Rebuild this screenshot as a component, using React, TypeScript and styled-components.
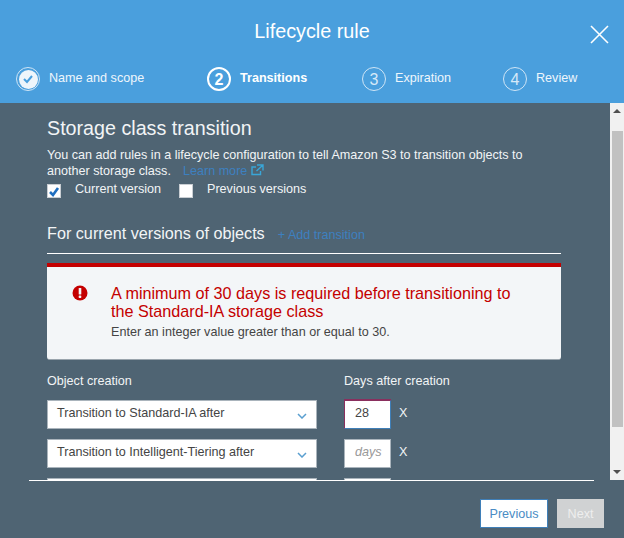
import styled, { createGlobalStyle } from "styled-components";

const GlobalStyle = createGlobalStyle`
  html, body {
    margin: 0;
    padding: 0;
    background: #4f6473;
  }
  * {
    box-sizing: border-box;
  }
`;

const Modal = styled.div`
  width: 624px;
  height: 538px;
  display: flex;
  flex-direction: column;
  overflow: hidden;
  background: #4f6473;
  color: #f2f4f6;
  font-family: "Liberation Sans", Arial, sans-serif;
  font-size: 12.6px;
`;

const Header = styled.header`
  height: 103px;
  flex: none;
  background: #4a9fdd;
  color: #fff;
  display: flex;
  flex-direction: column;
`;

const TitleBar = styled.div`
  height: 67px;
  flex: none;
  display: flex;
  align-items: flex-start;
  justify-content: center;
  padding-top: 20px;
  position: relative;
`;

const Title = styled.h1`
  margin: 0;
  font-size: 19.8px;
  font-weight: 400;
  line-height: 23px;
`;

const CloseButton = styled.div`
  position: absolute;
  top: 25px;
  right: 15px;
  width: 19px;
  height: 19px;
  display: flex;
`;

const Steps = styled.ol`
  margin: 0;
  padding: 0 0 0 16px;
  list-style: none;
  display: grid;
  grid-template-columns: 191px 155px 141px auto;
`;

const Step = styled.li`
  display: flex;
  align-items: flex-start;
  gap: 9px;
`;

const StepCircle = styled.span<{ $active?: boolean }>`
  width: 24px;
  height: 24px;
  flex: none;
  border-radius: 50%;
  border: ${({ $active }) => ($active ? "2px solid #fff" : "1px solid #cfe5f6")};
  color: ${({ $active }) => ($active ? "#fff" : "#d6e9f8")};
  font-size: 16px;
  font-weight: ${({ $active }) => ($active ? 700 : 400)};
  display: flex;
  align-items: center;
  justify-content: center;
  line-height: 1;
  padding-top: 2px;
`;

const DoneCircle = styled.span`
  width: 24px;
  height: 24px;
  flex: none;
  border-radius: 50%;
  border: 1px solid #cfe5f6;
  padding: 1.5px;
  display: flex;
`;

const DoneDisc = styled.span`
  flex: 1;
  border-radius: 50%;
  background: #eef5fb;
  display: flex;
  align-items: center;
  justify-content: center;
`;

const StepLabel = styled.span<{ $active?: boolean }>`
  font-weight: ${({ $active }) => ($active ? 700 : 400)};
  color: ${({ $active }) => ($active ? "#fff" : "#eef6fc")};
  line-height: 15px;
  margin-top: 4px;
`;

const Middle = styled.div`
  height: 377px;
  flex: none;
  display: flex;
  overflow: hidden;
`;

const Content = styled.main`
  flex: 1;
  min-width: 0;
  padding: 15px 49px 0 47px;
`;

const SectionTitle = styled.h2`
  margin: 0;
  font-size: 19.7px;
  font-weight: 400;
  line-height: 21px;
  color: #f2f4f6;
`;

const Intro = styled.p`
  margin: 8px 0 0;
  line-height: 16px;
  color: #f2f4f6;
  width: 490px;
`;

const LearnMore = styled.span`
  color: #3d80c0;
  margin-left: 12px;
`;

const ExternalIcon = styled.svg`
  margin-left: 4px;
  vertical-align: -1px;
`;

const Versions = styled.div`
  display: flex;
  margin-top: 3px;
  height: 18px;
`;

const Version = styled.label<{ $width: number }>`
  width: ${({ $width }) => $width}px;
  display: flex;
  gap: 14px;
  align-items: flex-start;
  line-height: 15px;
`;

const CheckBox = styled.span`
  width: 14px;
  height: 14px;
  margin-top: 2px;
  flex: none;
  background: #fff;
  border: 1px solid #c9ced3;
  display: flex;
  align-items: center;
  justify-content: center;
`;

const SubHeading = styled.div`
  margin-top: 24px;
  height: 30px;
  display: flex;
  align-items: flex-start;
  gap: 13px;
  border-bottom: 1px solid #fff;
`;

const SubTitle = styled.h3`
  margin: 0;
  font-size: 16.2px;
  font-weight: 400;
  line-height: 19px;
`;

const AddLink = styled.span`
  color: #3d80c0;
  line-height: 15px;
  margin-top: 4px;
`;

const Alert = styled.div`
  margin-top: 9px;
  height: 97px;
  background: #f3f6f8;
  border-top: 4px solid #c40000;
  border-bottom: 1px solid #9aa5ad;
  border-radius: 0 0 3px 3px;
  padding: 17px 20px 0 25px;
  display: flex;
  gap: 23px;
`;

const AlertIcon = styled.svg`
  flex: none;
  margin-top: 1px;
`;

const AlertBody = styled.div`
  width: 410px;
`;

const AlertTitle = styled.div`
  color: #c40000;
  font-size: 16.2px;
  line-height: 18px;
`;

const AlertText = styled.div`
  color: #444;
  line-height: 15px;
  margin-top: 5px;
`;

const FieldHeadings = styled.div`
  margin-top: 14px;
  display: grid;
  grid-template-columns: 297px auto;
  line-height: 15px;
`;

const FieldGrid = styled.div`
  margin-top: 11px;
  display: grid;
  grid-template-columns: 270px 47px auto;
  column-gap: 27px;
  grid-auto-rows: 29px;
  row-gap: 10px;
`;

const Select = styled.div`
  background: #fff;
  border: 1px solid #aab4bc;
  color: #444;
  padding: 5px 9px 0;
  line-height: 15px;
  display: flex;
  justify-content: space-between;
`;

const Chevron = styled.svg`
  margin: 7px 0 0 auto;
`;

const NumberBox = styled.div<{ $focused?: boolean; $empty?: boolean }>`
  background: #fff;
  border: 1px solid ${({ $focused }) => ($focused ? "#3f7fb8" : "#aab4bc")};
  ${({ $focused }) =>
    $focused
      ? "border-left-color: #8a2f5e; border-top-color: #8a2f5e; box-shadow: 0 -1px 0 #8a2f5e;"
      : ""}
  color: ${({ $empty }) => ($empty ? "#999" : "#444")};
  font-style: ${({ $empty }) => ($empty ? "italic" : "normal")};
  padding: 5px 0 0 10px;
  line-height: 15px;
`;

const RemoveMark = styled.span`
  line-height: 15px;
  margin: 6px 0 0 -19px;
`;

const ScrollBar = styled.div`
  width: 14px;
  flex: none;
  background: #f1f1f1;
  display: flex;
  flex-direction: column;
`;

const ScrollArrow = styled.span<{ $down?: boolean }>`
  height: 16px;
  flex: none;
  padding-left: 3px;
  display: flex;
  align-items: center;
  &::before {
    content: "";
    border-left: 4px solid transparent;
    border-right: 4px solid transparent;
    ${({ $down }) =>
      $down ? "border-top: 4px solid #505050;" : "border-bottom: 4px solid #505050;"}
  }
`;

const ScrollThumb = styled.span`
  width: 11px;
  height: 296px;
  margin: 12px 0 0 2px;
  background: #c1c1c1;
`;

const ScrollSpace = styled.span`
  flex: 1;
`;

const FooterRule = styled.hr`
  margin: 0 30px 0 29px;
  border: 0;
  border-top: 1px solid #fff;
  height: 0;
  flex: none;
`;

const Footer = styled.footer`
  padding: 18px 20px 0 0;
  display: flex;
  justify-content: flex-end;
  gap: 9px;
`;

const Button = styled.button<{ $disabled?: boolean; $width: number }>`
  width: ${({ $width }) => $width}px;
  height: 29px;
  padding: 0;
  font: inherit;
  border-radius: 0;
  border: 1px solid ${({ $disabled }) => ($disabled ? "#d0d2d3" : "#3f7fb8")};
  background: ${({ $disabled }) => ($disabled ? "#d0d2d3" : "#fff")};
  color: ${({ $disabled }) => ($disabled ? "#eee" : "#4a8cc4")};
`;

const stepItems = [
  { n: "2", label: "Transitions", active: true },
  { n: "3", label: "Expiration" },
  { n: "4", label: "Review" },
];

const rows = [
  { label: "Transition to Standard-IA after", days: "28", focused: true },
  { label: "Transition to Intelligent-Tiering after", days: "days" },
  { label: "", days: "" },
];

const App = () => {
  return (
    <Modal>
      <GlobalStyle />
      <Header>
        <TitleBar>
          <Title>Lifecycle rule</Title>
          <CloseButton>
            <svg width="19" height="19" viewBox="0 0 19 19">
              <path d="M1 1 L18 18 M18 1 L1 18" stroke="#fff" strokeWidth="1.6" fill="none" />
            </svg>
          </CloseButton>
        </TitleBar>
        <Steps>
          <Step>
            <DoneCircle>
              <DoneDisc>
                <svg width="12" height="10" viewBox="0 0 12 10">
                  <path d="M2 5 L5 8 L10 2" stroke="#4a9fdd" strokeWidth="2" fill="none" />
                </svg>
              </DoneDisc>
            </DoneCircle>
            <StepLabel>Name and scope</StepLabel>
          </Step>
          {stepItems.map((s) => (
            <Step key={s.n}>
              <StepCircle $active={s.active}>{s.n}</StepCircle>
              <StepLabel $active={s.active}>{s.label}</StepLabel>
            </Step>
          ))}
        </Steps>
      </Header>
      <Middle>
        <Content>
          <SectionTitle>Storage class transition</SectionTitle>
          <Intro>
            You can add rules in a lifecycle configuration to tell Amazon S3 to transition objects to
            another storage class.
            <LearnMore>
              Learn more
              <ExternalIcon width="13" height="12" viewBox="0 0 13 12">
                <path
                  d="M9.5 7 V10.5 H1 V3 H5 M6 1 H12 V6.5 M12 1 L5.5 7"
                  stroke="#39a6d8"
                  strokeWidth="1.4"
                  fill="none"
                />
              </ExternalIcon>
            </LearnMore>
          </Intro>
          <Versions>
            <Version $width={132}>
              <CheckBox>
                <svg width="12" height="11" viewBox="0 0 12 11">
                  <path d="M2 6 L5 9 L10 2" stroke="#1f6fc0" strokeWidth="2.6" fill="none" />
                </svg>
              </CheckBox>
              Current version
            </Version>
            <Version $width={200}>
              <CheckBox />
              Previous versions
            </Version>
          </Versions>
          <SubHeading>
            <SubTitle>For current versions of objects</SubTitle>
            <AddLink>+ Add transition</AddLink>
          </SubHeading>
          <Alert>
            <AlertIcon width="16" height="16" viewBox="0 0 16 16">
              <circle cx="8" cy="8" r="7.5" fill="#c40000" />
              <rect x="6.7" y="3" width="2.6" height="6.5" rx="0.6" fill="#f3f6f8" />
              <rect x="6.7" y="10.5" width="2.6" height="2.4" rx="0.6" fill="#f3f6f8" />
            </AlertIcon>
            <AlertBody>
              <AlertTitle>
                A minimum of 30 days is required before transitioning to the Standard-IA storage class
              </AlertTitle>
              <AlertText>Enter an integer value greater than or equal to 30.</AlertText>
            </AlertBody>
          </Alert>
          <FieldHeadings>
            <span>Object creation</span>
            <span>Days after creation</span>
          </FieldHeadings>
          <FieldGrid>
            {rows.map((r, i) => (
              <Row key={i} {...r} />
            ))}
          </FieldGrid>
        </Content>
        <ScrollBar>
          <ScrollArrow />
          <ScrollThumb />
          <ScrollSpace />
          <ScrollArrow $down />
        </ScrollBar>
      </Middle>
      <FooterRule />
      <Footer>
        <Button $width={68}>Previous</Button>
        <Button $width={47} $disabled>
          Next
        </Button>
      </Footer>
    </Modal>
  );
};

type RowProps = {
  label: string;
  days: string;
  focused?: boolean;
};

const Row = ({ label, days, focused }: RowProps) => {
  return (
    <>
      <Select>
        {label}
        <Chevron width="10" height="6" viewBox="0 0 10 6">
          <path d="M1 1 L5 5 L9 1" stroke="#5a9fd0" strokeWidth="1.5" fill="none" />
        </Chevron>
      </Select>
      <NumberBox $focused={focused} $empty={!focused}>
        {days}
      </NumberBox>
      {days && <RemoveMark>X</RemoveMark>}
    </>
  );
};

export default App;
